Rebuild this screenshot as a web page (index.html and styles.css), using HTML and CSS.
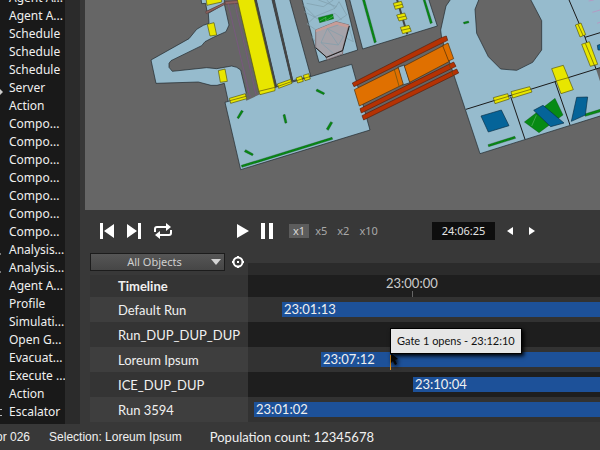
FILE: index.html
```
<!DOCTYPE html>
<html lang="en">
<head>
<meta charset="utf-8">
<title>Simulation timeline</title>
<link rel="stylesheet" href="styles.css">
</head>
<body>
<div class="app">
  <div class="workspace">
    <aside class="sidebar">
      <ul class="objects">
        <li>Agent A...</li>
        <li>Agent A...</li>
        <li>Schedule</li>
        <li>Schedule</li>
        <li>Schedule</li>
        <li class="has-arrow">Server</li>
        <li>Action</li>
        <li>Compo...</li>
        <li>Compo...</li>
        <li>Compo...</li>
        <li>Compo...</li>
        <li>Compo...</li>
        <li>Compo...</li>
        <li>Compo...</li>
        <li class="has-dot">Analysis...</li>
        <li class="has-dot">Analysis...</li>
        <li>Agent A...</li>
        <li>Profile</li>
        <li>Simulati...</li>
        <li>Open G...</li>
        <li>Evacuat...</li>
        <li>Execute ...</li>
        <li>Action</li>
        <li class="has-steps">Escalator</li>
      </ul>
      <div class="scroll-track"></div>
    </aside>
    <main class="main">
      <svg class="map" viewBox="255 0 1545 630" preserveAspectRatio="xMinYMin slice" aria-label="Floor plan">
        <!-- west ramp -->
        <g transform="translate(255 0)">
          <path class="floor" d="M348-5L350 11L362 10L366 34L418 10V-5Z"/>
          <path class="floor" d="M370 40L418 12L432 75L423 95L385 112L360 125L350 137L258 182L252 190V202L262 214L365 203L395 206L440 198L455 202L467 210L485 285L430 305L418 250L396 256L378 256L340 246L213 250L198 180L312 116L335 88L355 76L372 70Z"/>
          <path class="door" d="M363-5L366 16L410 6V-5ZM367 73L387 68L395 105L375 108ZM400 212L420 207L427 244L406 247Z"/>
          <path class="beam" d="M362 35L418 8L420 13L364 41ZM420 5L490-2L470 9L421 13Z"/>
          <path class="guide" d="M429 10L495 290M449 10L515 290"/>
        </g>
        <!-- lower hall -->
        <g transform="translate(660 180)">
          <path class="floor" d="M15 127L395 13L450 210L62 329Z"/>
          <path class="gap" d="M79 122L74 103L114 86L120 103Z"/>
          <path class="guide" d="M83 85L91 110M101 80L109 105"/>
        </g>
        <!-- escalator strips -->
        <g transform="translate(660 0)">
          <path class="floor" d="M108-5H155L214 242L170 260Z"/>
          <path class="floor" d="M162-5H208L272 228L218 242Z"/>
          <path class="seam-wide" d="M105-5L168 262M158-5L217 242"/>
          <path class="door" d="M51-5H102L165 262V272L120 284L116 272ZM28 295L76 281L80 296L32 310ZM172 252L212 238L216 250L176 265ZM228 234L244 228L250 244L233 249ZM250 226L266 221L271 237L255 242Z"/>
          <path class="seam-thin" d="M30 302L78 289M116 274L165 262M174 259L214 245M230 242L269 230"/>
          <path class="floor" d="M245-5H375L413 150L297 187Z"/>
          <path class="wire" d="M250 15L285 50L345 25L320 0M285 50L262 72L288 90M345 25L357 5L380 45L345 68M295 0L350 20M253 35L300 60L345 40L365 60M260 10L310 20L340 0M275 110L290 130M388 85L400 125L380 115"/>
          <path class="rail" d="M295 53L338 42L341 56L299 68Z"/>
          <path class="seam-light" d="M299 63L318 52L317 63L339 49"/>
          <path class="stage" d="M287 90L348 65L387 75L367 152L320 172L287 143Z"/>
          <path class="stage-edge" d="M287 90L348 65L387 75L384 83L350 74L288 97Z"/>
          <path class="wire" d="M303 128L322 86L355 75M322 86L355 135L303 128L345 165M355 135L370 110L322 86"/>
          <path class="stage" d="M317 172L368 151V162L322 179Z"/>
          <path class="seam" d="M388 78L368 152L320 172L287 143"/>
        </g>
        <!-- lower hall fittings -->
        <g transform="translate(660 180)">
          <path class="rail" d="M64 151L70 154L56 176L51 173ZM189 165L195 163L201 188L195 190ZM291 87L314 99L311 104L288 93ZM332 185L338 188L325 211L319 207ZM77 269L100 282L97 287L73 275ZM64 316L336 232L338 238L66 322Z"/>
        </g>
        <!-- centre room and bridge -->
        <g transform="translate(1020 0)">
          <path class="floor" d="M28-5H265L292 78L68 147Z"/>
          <path class="rail" d="M66-5H73L109 126L103 129ZM248-5H254L277 68L271 71Z"/>
          <path class="seam-wide" d="M170-5L202 103"/>
          <path class="door" d="M160 10L184 4L190 22L166 28ZM170 45L194 39L201 57L177 63ZM181 82L207 76L214 94L188 101Z"/>
          <path class="seam-thin" d="M163 19L187 13M173 54L198 48M184 91L211 85"/>
          <path class="floor" d="M174 202L193 195L210 248L188 255Z"/>
          <path class="ramp" d="M43 269L175 203L190 253L58 318ZM193 198L323 130L336 180L209 247Z"/>
          <path class="seam-thin" d="M163 209L177 258"/>
        </g>
        <!-- east concourse -->
        <g transform="translate(1320 0)">
          <path class="floor" fill-rule="evenodd" d="M34-5L18 18L2 90L5 115L120 461L490 345V-5ZM118-5L105 28L110 100L145 170L182 207L230 211L278 187L305 150V62L270-5Z"/>
          <path class="gap" d="M468 207L490 200V275Z"/>
          <path class="seam" d="M78 328L468 207L490 200M212 290L255 418M345 245L390 375M385-5L435 112L468 207M435 112L490 95"/>
          <path class="pink" d="M446 3L461 0M457 37L480 30M471 70L482 66"/>
          <path class="door" d="M406 75L423 69L437 104L420 111ZM425 133L448 125L473 193L451 199ZM335 206L370 196L400 269L363 281ZM160 293L203 281L208 297L165 311ZM213 275L269 260L276 276L218 294Z"/>
          <path class="seam-thin" d="M414 73L430 108M436 130L463 196M349 243L385 233M162 302L206 289M215 285L273 268"/>
          <path class="rail" d="M70 67L85 63L87 68L72 72ZM144 434L224 409L227 415L146 440ZM253 366L345 295L369 345L297 398ZM434 342L490 325V333L436 349Z"/>
          <path class="seam-light" d="M289 346L275 378"/>
          <path class="pool" d="M123 348L184 330L207 377L145 396ZM281 331L309 316L372 369L332 380ZM410 292L443 291L436 345L394 364ZM472 136L490 130V150L474 150Z"/>
        </g>
        <!-- bridge handrails -->
        <g transform="translate(1020 0)">
          <path class="ramp" d="M308 137L324 129L341 176L326 183Z"/>
          <path class="hand" d="M37 249L304 113L319 108L323 121L42 260ZM60 326L341 186L348 199L64 339ZM66 347L350 207L356 219L71 360Z"/>
          <path class="seam-thin" d="M327 193L332 205M335 214L340 227"/>
        </g>
      </svg>

      <div class="transport">
        <div class="group skip">
          <button aria-label="Previous"><svg width="14" height="16" viewBox="0 0 14 16"><path d="M0 0H3V16H0ZM14 1V15L4 8Z"/></svg></button>
          <button aria-label="Next"><svg width="14" height="16" viewBox="0 0 14 16"><path d="M11 0H14V16H11ZM0 1V15L10 8Z"/></svg></button>
          <button aria-label="Loop"><svg width="18" height="16" viewBox="0 0 18 16"><path class="line" d="M1 9V6Q1 4 3 4H13M17 7V10Q17 12 15 12H5"/><path d="M12 0L17 4L12 8ZM6 8L1 12L6 16Z"/></svg></button>
        </div>
        <div class="group play">
          <button aria-label="Play"><svg width="12" height="14" viewBox="0 0 12 14"><path d="M0 0L12 7L0 14Z"/></svg></button>
          <button aria-label="Pause"><svg width="12" height="16" viewBox="0 0 12 16"><path d="M0 0H4V16H0ZM8 0H12V16H8Z"/></svg></button>
        </div>
        <div class="group speeds">
          <button class="speed active">x1</button>
          <button class="speed">x5</button>
          <button class="speed">x2</button>
          <button class="speed">x10</button>
        </div>
        <output class="clock">24:06:25</output>
        <div class="group step">
          <button aria-label="Step back"><svg width="6" height="8" viewBox="0 0 6 8"><path d="M6 0V8L0 4Z"/></svg></button>
          <button aria-label="Step forward"><svg width="6" height="8" viewBox="0 0 6 8"><path d="M0 0V8L6 4Z"/></svg></button>
        </div>
      </div>

      <section class="timeline">
        <div class="names">
          <div class="filter">
            <div class="picker">
              <select aria-label="Object filter"><option>All Objects</option></select>
              <svg class="caret" width="10" height="6" viewBox="0 0 10 6"><path d="M0 0H10L5 6Z"/></svg>
            </div>
            <button aria-label="Focus"><svg width="12" height="12" viewBox="0 0 12 12"><circle class="line" cx="6" cy="6" r="4.5"/><path d="M5 0H7V2H5ZM5 10H7V12H5ZM0 5H2V7H0ZM10 5H12V7H10ZM5 5H7V7H5Z"/></svg></button>
          </div>
          <h2 class="name heading">Timeline</h2>
          <div class="name">Default Run</div>
          <div class="name">Run_DUP_DUP_DUP</div>
          <div class="name">Loreum Ipsum</div>
          <div class="name">ICE_DUP_DUP</div>
          <div class="name">Run 3594</div>
        </div>
        <div class="tracks">
          <div class="ruler"><span class="tick" style="margin-left:138px">23:00:00</span></div>
          <div class="track"><div class="bar" style="margin-left:34px">23:01:13</div></div>
          <div class="track"></div>
          <div class="track"><div class="bar" style="margin-left:73px">23:07:12</div>
            <div class="event" style="left:142px">
              <div class="tooltip" role="tooltip">Gate 1 opens - 23:12:10</div>
              <svg class="cursor" width="8" height="12" viewBox="0 0 8 12"><path d="M0 0L7 6L4 7L6 11L4 12L2 8L0 10Z"/></svg>
            </div>
          </div>
          <div class="track"><div class="bar" style="margin-left:165px">23:10:04</div></div>
          <div class="track"><div class="bar" style="margin-left:6px">23:01:02</div></div>
        </div>
      </section>
    </main>
  </div>
  <footer class="status">
    <span class="agent">or 026</span>
    <span class="selection">Selection: Loreum Ipsum</span>
    <span class="population">Population count: 12345678</span>
  </footer>
</div>
</body>
</html>
```

FILE: styles.css
```
* { box-sizing: border-box; }

body {
  margin: 0;
  background: #383838;
  color: #f0f0f0;
  font: 13px/18px "Noto Sans", sans-serif;
}

button {
  display: flex;
  padding: 0;
  border: 0;
  background: none;
  color: inherit;
  font: inherit;
}

svg { display: block; fill: #fff; }
.line { fill: none; stroke: #fff; stroke-width: 2; }

.app {
  display: flex;
  flex-direction: column;
  height: 100vh;
  overflow: hidden;
}

.workspace { display: flex; flex: 1; min-height: 0; }

/* object list */
.sidebar { display: flex; flex: none; background: #191919; margin-right: 5px; }

.objects {
  display: flex;
  flex-direction: column;
  justify-content: flex-end;
  width: 65px;
  margin: 0;
  padding: 0 0 3px;
  overflow: hidden;
  list-style: none;
  font-size: 12px;
}

.objects li { flex: none; position: relative; padding-left: 9px; white-space: nowrap; }

.objects li::before { position: absolute; left: 0; color: #bbb; }
.has-arrow::before { content: ""; top: 10px; border: 3px solid transparent; border-left-color: #ccc; border-right: 0; }
.has-dot::before { content: ""; top: 12px; width: 1px; height: 2px; background: #777; }
.has-steps::before { content: ""; top: 6px; width: 2px; height: 5px; border: solid #bbb; border-width: 1px 0; }

.scroll-track { width: 15px; background: #2b2b2b; }

.main { display: flex; flex: 1; flex-direction: column; min-width: 0; }

/* floor plan */
.map { flex: 1; width: 100%; min-height: 0; background: #666; stroke-width: 2; }
.floor { fill: #96bbcd; stroke: #1c2429; }
.gap { fill: #666; }
.door { fill: #e8e600; stroke: #55540c; }
.rail { fill: #078a14; stroke: #0a4210; stroke-width: 1; }
.ramp { fill: #e07000; stroke: #4c2c08; }
.hand { fill: #b53203; stroke: #571e0a; }
.pool { fill: #056499; stroke: #0a3047; }
.stage { fill: #a5a3aa; stroke: #6f5454; }
.stage-edge { fill: #c79c97; }
.beam { fill: #8f6360; stroke: #5d4442; }
.guide { fill: none; stroke: #80508a; }
.wire { fill: none; stroke: #7f9dab; }
.pink { fill: none; stroke: #b39bc4; stroke-width: 3; }
.seam { fill: none; stroke: #1a1a1a; stroke-width: 3; }
.seam-wide { fill: none; stroke: #444; stroke-width: 6; }
.seam-thin { fill: none; stroke: #5a4d10; }
.seam-light { fill: none; stroke: #5fb468; }

/* playback controls */
.transport { display: flex; align-items: center; height: 42px; padding-left: 15px; }
.group { display: flex; align-items: center; }
.skip { gap: 13px; width: 137px; }
.play { gap: 12px; width: 52px; }
.speeds { gap: 2px; width: 143px; color: #a8a8a8; font-size: 11px; line-height: 14px; }
.speed { padding: 0 4px; }
.speed.active { background: #5c5c5c; color: #d8d8d8; }
.clock { width: 63px; background: #0e0e0e; color: #e4e4e4; font-size: 11px; text-align: center; }
.step { gap: 16px; margin-left: 12px; }

/* timeline */
.timeline { display: flex; flex: none; padding: 0 0 2px 5px; font-family: Lato, sans-serif; }
.names { flex: none; width: 158px; }

.filter { display: flex; align-items: center; gap: 7px; height: 23px; padding-bottom: 3px; }
.picker { position: relative; width: 135px; }

select {
  display: block;
  width: 100%;
  height: 18px;
  padding: 0 6px 0 0;
  border: 1px solid #1c1c1c;
  border-radius: 0;
  appearance: none;
  background: linear-gradient(#565656, #464646);
  color: #cfcfcf;
  font: 11px/16px "Noto Sans", sans-serif;
  text-align: center;
  text-align-last: center;
}

.caret { position: absolute; top: 6px; right: 4px; fill: #d4d4d4; }

.name {
  height: 25px;
  margin: 0;
  padding-left: 28px;
  background: #3e3e3e;
  font-size: 13px;
  font-weight: 400;
  line-height: 27px;
}
.name:nth-child(odd) { background: #3e3e3e; }
.name:nth-child(even) { background: #343434; }
.name.heading { height: 22px; font-weight: 700; line-height: 22px; }

.tracks { flex: 1; min-width: 0; margin-top: 11px; background: #2b2b2b; }
.ruler { height: 34px; border-top: 12px solid #2b2b2b; background: #1e1e1e; color: #ccc; line-height: 17px; }

.tick { display: block; position: relative; width: 51px; height: 22px; }
.tick::after { position: absolute; bottom: 0; left: 50%; width: 1px; height: 6px; background: #666; content: ""; }

.track { display: flex; position: relative; align-items: center; height: 25px; background: #1e1e1e; }
.track:nth-child(even) { background: #323232; }
.bar { flex: 1; height: 15px; padding-left: 2px; background: #1d5199; line-height: 15px; }

.event { position: absolute; bottom: 2px; width: 1px; height: 15px; background: #e8951c; }
.tooltip {
  position: absolute;
  bottom: 16px;
  left: 0;
  z-index: 1;
  padding: 3px 6px;
  border: 1px solid #000;
  background: #e6e6e6;
  box-shadow: 2px 2px 4px #000;
  color: #111;
  font-size: 11px;
  white-space: nowrap;
}
.cursor { position: absolute; top: -2px; left: 1px; fill: #060606; filter: drop-shadow(1px 2px 2px #000); }

/* status bar */
.status { display: flex; flex: none; gap: 19px; height: 26px; font: 12px/26px "Liberation Sans", sans-serif; white-space: nowrap; }
.agent { margin-left: -4px; }
.population { margin-left: 9px; font: 13px/26px Lato, sans-serif; }
```
